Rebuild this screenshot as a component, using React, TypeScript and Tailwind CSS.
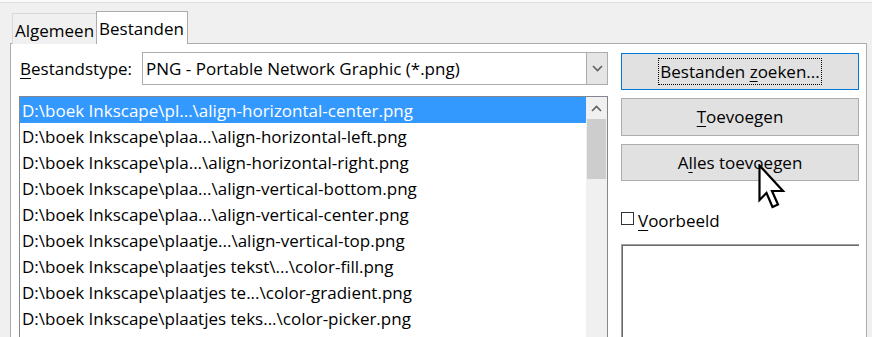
import React from "react";

const files = [
  "D:\\boek Inkscape\\pl...\\align-horizontal-center.png",
  "D:\\boek Inkscape\\plaa...\\align-horizontal-left.png",
  "D:\\boek Inkscape\\pla...\\align-horizontal-right.png",
  "D:\\boek Inkscape\\plaa...\\align-vertical-bottom.png",
  "D:\\boek Inkscape\\plaa...\\align-vertical-center.png",
  "D:\\boek Inkscape\\plaatje...\\align-vertical-top.png",
  "D:\\boek Inkscape\\plaatjes tekst\\...\\color-fill.png",
  "D:\\boek Inkscape\\plaatjes te...\\color-gradient.png",
  "D:\\boek Inkscape\\plaatjes teks...\\color-picker.png",
];

function Chevron({ up = false }: { up?: boolean }) {
  return (
    <svg width="11" height="7" viewBox="0 0 11 7">
      <polyline
        points={up ? "1,6 5.5,1.5 10,6" : "1,1 5.5,5.5 10,1"}
        fill="none"
        stroke="#606060"
        strokeWidth="1.6"
      />
    </svg>
  );
}

function Cursor() {
  return (
    <svg width="28" height="46" viewBox="0 0 28 46" className="absolute left-[758px] top-[164px]">
      <path
        d="M1.5 1.5 V36 L8.5 29 L14.5 43 L20 40.5 L14 27 L25 27 Z"
        fill="#fff"
        stroke="#000"
        strokeWidth="2.2"
        strokeLinejoin="miter"
      />
    </svg>
  );
}

export default function App() {
  return (
    <div
      className="relative w-[872px] h-[337px] overflow-hidden bg-[#f0f0f0] text-black text-[17px] leading-none"
      style={{ fontFamily: '"Open Sans", "Noto Sans", sans-serif' }}
    >
      <div className="h-[2px] bg-[#fafafa]" />
      <div className="h-[1px] bg-[#dcdcdc]" />

      {/* tabs */}
      <div className="flex items-end pl-[12px] pt-[8px] h-[40px]">
        <div className="h-[31px] w-[85px] border border-b-0 border-[#d9d9d9] bg-[#f0f0f0] flex items-center pl-[2px] pt-[2px] relative top-[1px]">
          Algemeen
        </div>
        <div className="h-[33px] w-[92px] -ml-[1px] border border-b-0 border-[#adadad] bg-white flex items-center pl-[2px] z-10 relative top-[1px]">
          Bestanden
        </div>
      </div>

      {/* panel */}
      <div className="ml-[10px] w-[857px] h-[300px] border border-[#adadad] bg-white flex">
        {/* left column */}
        <div className="pl-[8px] pt-[8px] w-[597px]">
          <div className="flex items-center h-[33px]">
            <div className="w-[123px] pl-[1px]">
              <span className="underline underline-offset-[3px]">B</span>estandstype:
            </div>
            <div className="flex-1 h-[33px] border border-[#acacac] flex items-center">
              <div className="flex-1 pl-[3px]">PNG - Portable Network Graphic (*.png)</div>
              <div className="w-[21px] h-full bg-[#e5e5e5] border-l border-[#acacac] flex items-center justify-center">
                <Chevron />
              </div>
            </div>
          </div>

          <div className="mt-[11px] w-[589px] h-[260px] border border-[#828790] flex">
            <div className="flex-1">
              {files.map((f, i) => (
                <div
                  key={i}
                  className={
                    "h-[26px] pl-[2px] flex items-center whitespace-nowrap " +
                    (i === 0 ? "bg-[#3399ff] text-white" : "")
                  }
                >
                  {f}
                </div>
              ))}
            </div>
            <div className="w-[21px] bg-[#f0f0f0] flex flex-col">
              <div className="h-[22px] flex items-center justify-center">
                <Chevron up />
              </div>
              <div className="h-[60px] mx-[1px] bg-[#cdcdcd]" />
            </div>
          </div>
        </div>

        {/* right column */}
        <div className="ml-[13px] w-[238px] pt-[9px] flex flex-col">
          <div className="h-[38px] border border-[#0078d7] bg-[#e1e1e1] flex items-center justify-center">
            <span className="outline outline-1 outline-dotted outline-black px-[1px] py-[4px]">
              Bestanden <span className="underline underline-offset-[3px]">z</span>oeken...
            </span>
          </div>
          <div className="mt-[8px] h-[38px] border border-[#adadad] bg-[#e1e1e1] flex items-center justify-center">
            <span>
              <span className="underline underline-offset-[3px]">T</span>oevoegen
            </span>
          </div>
          <div className="mt-[8px] h-[38px] border border-[#adadad] bg-[#e1e1e1] flex items-center justify-center">
            <span>
              A<span className="underline underline-offset-[3px]">l</span>les toevoegen
            </span>
          </div>

          <div className="mt-[31px] flex items-center h-[14px]">
            <div className="w-[13px] h-[13px] border border-[#333] bg-white" />
            <div className="ml-[4px] pt-[3px]">
              <span className="underline underline-offset-[3px]">V</span>oorbeeld
            </div>
          </div>

          <div className="mt-[18px] h-[100px] border-t border-l border-[#a0a0a0] border-r-[#e3e3e3] border-b-[#e3e3e3] bg-white">
            <div className="h-full border-t border-l border-[#696969]" />
          </div>
        </div>
      </div>

      <Cursor />
    </div>
  );
}
